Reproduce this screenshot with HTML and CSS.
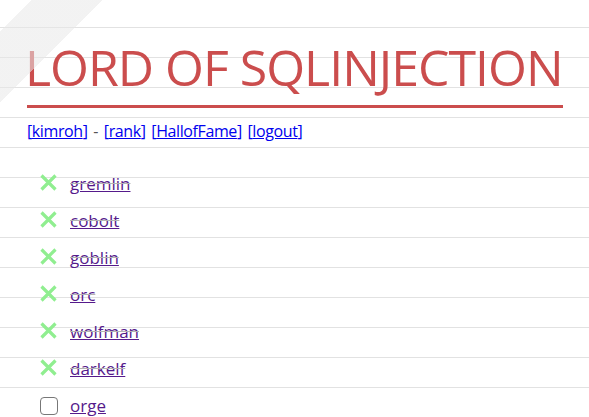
FILE: index.html
```html
<!DOCTYPE html>
<html>

<head>
  <title>Lord of SQLInjection</title>
  <link rel="stylesheet" href="styles.css">
</head>

<body>
  <div class="ribbon"></div>

  <div class="container">
    <h1 class="title">LORD OF SQLINJECTION</h1>

    <div class="nav">
      <a class="nav-link" href="#">[<u>kimroh</u>]</a> - <a class="nav-link" href="#">[<u>rank</u>]</a>
      <a class="nav-link" href="#">[<u>HallofFame</u>]</a> <a class="nav-link" href="#">[<u>logout</u>]</a>
    </div>

    <ul class="stages">
      <li class="stage cleared">
        <span class="mark"><svg viewBox="0 0 17 17"><path d="M1.5 1.5L15.5 15.5M15.5 1.5L1.5 15.5" /></svg></span>
        <s><a href="#">gremlin</a></s>
      </li>
      <li class="stage cleared">
        <span class="mark"><svg viewBox="0 0 17 17"><path d="M1.5 1.5L15.5 15.5M15.5 1.5L1.5 15.5" /></svg></span>
        <s><a href="#">cobolt</a></s>
      </li>
      <li class="stage cleared">
        <span class="mark"><svg viewBox="0 0 17 17"><path d="M1.5 1.5L15.5 15.5M15.5 1.5L1.5 15.5" /></svg></span>
        <s><a href="#">goblin</a></s>
      </li>
      <li class="stage cleared">
        <span class="mark"><svg viewBox="0 0 17 17"><path d="M1.5 1.5L15.5 15.5M15.5 1.5L1.5 15.5" /></svg></span>
        <s><a href="#">orc</a></s>
      </li>
      <li class="stage cleared">
        <span class="mark"><svg viewBox="0 0 17 17"><path d="M1.5 1.5L15.5 15.5M15.5 1.5L1.5 15.5" /></svg></span>
        <s><a href="#">wolfman</a></s>
      </li>
      <li class="stage cleared">
        <span class="mark"><svg viewBox="0 0 17 17"><path d="M1.5 1.5L15.5 15.5M15.5 1.5L1.5 15.5" /></svg></span>
        <s><a href="#">darkelf</a></s>
      </li>
      <li class="stage">
        <span class="mark"><span class="box"></span></span>
        <a href="#">orge</a>
      </li>
    </ul>
  </div>
</body>

</html>
```

FILE: styles.css
```css
html {
  background: repeating-linear-gradient(to bottom,
      transparent 0, transparent 27px,
      #e2e2e2 27px, #e2e2e2 28px,
      transparent 28px, transparent 30px);
  background-color: #fff;
}

body {
  margin: 0;
  font-family: "Open Sans", sans-serif;
  color: #555;
}

.ribbon {
  position: absolute;
  top: 0;
  left: 0;
  width: 120px;
  height: 120px;
  pointer-events: none;
  background: linear-gradient(135deg,
      transparent 22.6px,
      rgba(232, 232, 232, 0.55) 22.6px, rgba(232, 232, 232, 0.55) 72.8px,
      transparent 72.8px);
}

.container {
  padding: 42px 26px 0 27px;
}

.title {
  margin: 0;
  padding-bottom: 13px;
  font-size: 50px;
  line-height: 50px;
  font-weight: normal;
  letter-spacing: -1px;
  text-indent: -2px;
  color: #cb4d4d;
  border-bottom: 3px solid #cb4d4d;
  white-space: nowrap;
}

.nav {
  margin-top: 12px;
  font-size: 16px;
  line-height: 22px;
  letter-spacing: -0.4px;
  word-spacing: 2px;
}

.nav-link {
  color: #0000ee;
  text-decoration: none;
}

.stages {
  list-style: none;
  margin: 23px 0 0;
  padding: 0 0 0 13px;
}

.stage {
  display: flex;
  align-items: center;
  gap: 11px;
  height: 37px;
  font-size: 17px;
}

.stage a {
  color: #551a8b;
}

.stage s {
  color: #b4b4b4;
}

.mark {
  display: flex;
  width: 19px;
  margin-top: -2px;
}

.mark svg {
  width: 17px;
  height: 17px;
  fill: none;
  stroke: #90ee90;
  stroke-width: 3.2;
}

.box {
  width: 16px;
  height: 16px;
  margin-top: 2px;
  border: 1.5px solid #777;
  border-radius: 4px;
  background: #fff;
}
```
